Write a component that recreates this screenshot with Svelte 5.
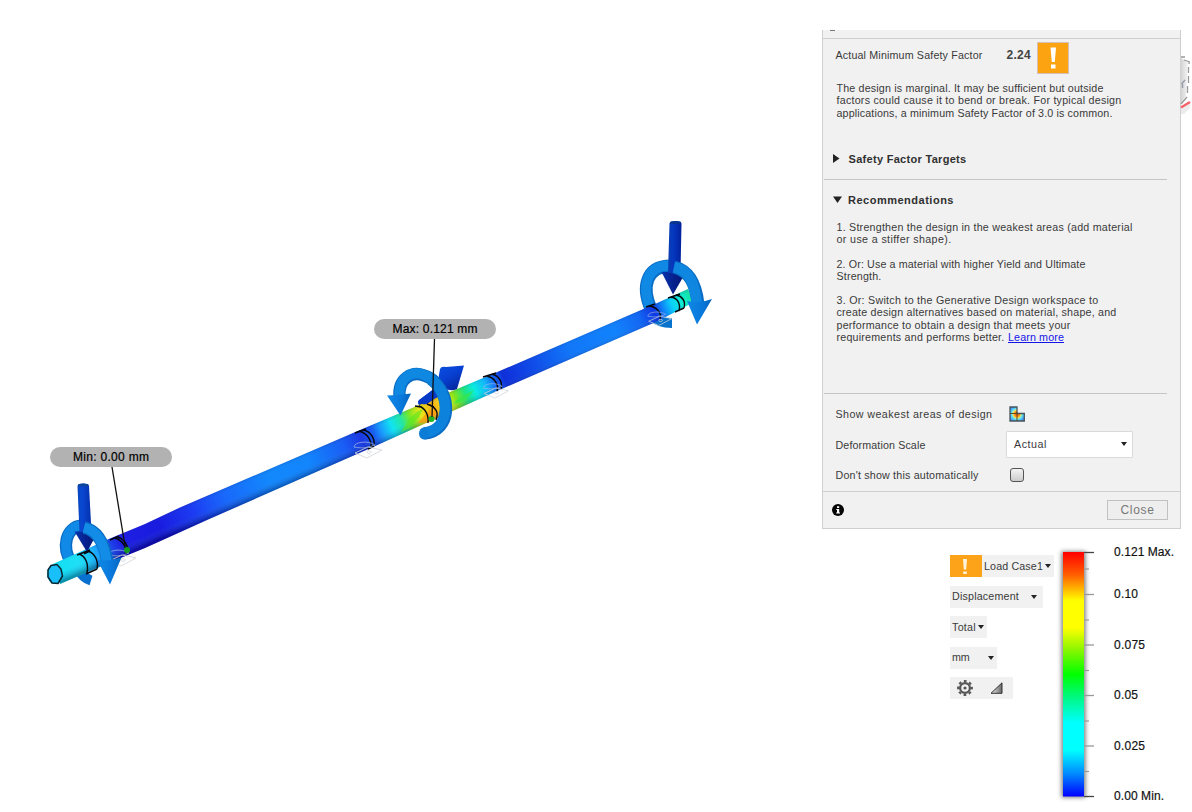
<script>
  const shaft = [
    [55, '#0be3f2'], [80, '#1be2f4'], [94, '#18b8fb'], [104, '#1585fb'], [112, '#1740e6'], [122, '#1a16e0'], [160, '#1412dc'],
    [195, '#1736f2'], [225, '#1463fb'], [270, '#0d86fc'], [310, '#0d82fc'], [345, '#1558f4'], [362, '#1730e0'], [374, '#1458f0'],
    [382, '#149cfc'], [392, '#0be6f2'], [402, '#1eeaa0'], [411, '#7cee14'], [421, '#f0ea0a'], [434, '#ffb40c'],
    [447, '#f8ee08'], [456, '#7fe80e'], [466, '#18e87a'], [475, '#04f0df'], [486, '#0cb8fb'], [494, '#1268f4'],
    [504, '#0a28d8'], [530, '#0a42e6'], [570, '#0c74f8'], [615, '#0c80fc'], [640, '#0e62f2'], [655, '#0a2ee0'], [663, '#0a80f8'],
    [672, '#04d4fa'], [682, '#08f3cc'], [692, '#12e69a']
  ];
  const outline = 'M53 564 110 538.5 145 524 180 507.500 360 430 495 373 655 304 688 289 694 302 658 321 497 391 373 447 207 520 145 548 123 557 60 584Z';
  const ticks = [
    { y: 552, label: '0.121 Max.', width: 60 }, { y: 594, label: '0.10', width: 24 }, { y: 644.5, label: '0.075', width: 31 },
    { y: 695, label: '0.05', width: 24 }, { y: 745.5, label: '0.025', width: 31 }, { y: 796, label: '0.00 Min.', width: 50 }
  ];
  const minor = [568.5, 619.5, 670, 720.5, 771];
  const recs = [
    [['1. Strengthen the design in the weakest areas (add material', 296], ['or use a stiffer shape).', 115]],
    [['2. Or: Use a material with higher Yield and Ultimate', 249], ['Strength.', 45]],
    [['3. Or: Switch to the Generative Design workspace to', 262], ['create design alternatives based on material, shape, and', 280],
     ['performance to obtain a design that meets your', 234], ['requirements and performs better.', 168]]
  ];
  const summary = [
    ['The design is marginal. It may be sufficient but outside', 267],
    ['factors could cause it to bend or break. For typical design', 285],
    ['applications, a minimum Safety Factor of 3.0 is common.', 276]
  ];
  // Spreads the letters so that a line takes the given width.
  const fit = (node, width) => {
    const range = document.createRange();
    range.selectNodeContents(node);
    const extra = width - range.getBoundingClientRect().width;
    node.style.letterSpacing = extra / node.textContent.length + 'px';
  };
</script>

<div class="app">
  <svg class="scene" width="822" height="812" viewBox="0 0 822 812">
    <defs>
      <linearGradient id="shaft" gradientUnits="userSpaceOnUse" x1="55" y1="574" x2="692" y2="296">
        {#each shaft as [x, color]}<stop offset={(x - 55) / 637} stop-color={color} />{/each}
      </linearGradient>
      <linearGradient id="shade" gradientUnits="userSpaceOnUse" x1="361" y1="428" x2="370" y2="449">
        <stop offset="0" stop-color="#003" stop-opacity=".22" /><stop offset=".25" stop-color="#6af" stop-opacity=".06" />
        <stop offset=".6" stop-color="#6af" stop-opacity=".06" /><stop offset="1" stop-color="#003" stop-opacity=".36" />
      </linearGradient>
      <linearGradient id="stem"><stop offset="0" stop-color="#0a45bd" /><stop offset=".3" stop-color="#0848d2" /><stop offset="1" stop-color="#0430ac" /></linearGradient>
      <linearGradient id="stemR"><stop offset="0" stop-color="#0a3fb0" /><stop offset=".4" stop-color="#0538c0" /><stop offset="1" stop-color="#03209c" /></linearGradient>
      <linearGradient id="cone"><stop offset="0" stop-color="#0a35b0" /><stop offset=".5" stop-color="#06208c" /><stop offset="1" stop-color="#041470" /></linearGradient>
      <linearGradient id="push" x1="0" y1="0" x2=".6" y2="1"><stop offset="0" stop-color="#0a50e0" /><stop offset=".5" stop-color="#0840d2" /><stop offset="1" stop-color="#0628a0" /></linearGradient>
      <linearGradient id="turn"><stop offset="0" stop-color="#1089e4" /><stop offset=".6" stop-color="#0878dc" /><stop offset="1" stop-color="#0664bc" /></linearGradient>
      <g id="fixture" fill="none" stroke="#d3d6da" stroke-width="1" opacity=".85">
        <path d="M-11 5 2-1 16 2 1 10Z" /><path d="M-12-1C-12-6 2-8 9-3C3-1-2 1-12-1Z" stroke="#a9c0e4" opacity=".8" /><ellipse cx="3" cy="4" rx="2.200" ry="1.300" />
      </g>
    </defs>

    <g fill="none">
      <path d="M82 525.500C65 527 62 548 71 562" stroke="#0a6cc4" stroke-width="12.300" /><path d="M82 525C65 527 62 547 70.500 562" stroke="#108ae6" stroke-width="9.500" />
      <path d="M78 569Q83 578 91 580.500" stroke="#0870cf" stroke-width="10" />
      <path d="M669 266C647 267 641 286 651 309" stroke="#0a6cc4" stroke-width="12.800" /><path d="M669 265.500C647 266 641 285 650.500 309" stroke="#1089e4" stroke-width="10" />
      <path d="M651 316Q659 323 672 323" stroke="#0873cd" stroke-width="10" />
    </g>
    <path d="M418 401 440 384 447 391 427 407Q417 407 418 401Z" fill="#083ac8" />

    <path d={outline} fill="url(#shaft)" />
    <path d={outline} fill="url(#shade)" />
    <path d="M401 432 409 419 418 411 423 409 419 417 410 428Z" fill="#5be521" opacity=".6" />
    <path d="M418 423 430 409 437 412 431 422Z" fill="#ff960b" opacity=".7" />
    <path d="M453 404 459 398 474 390 466 400Z" fill="#35e648" opacity=".7" />
    <path d="M419 400 437 387 443 393 427 404Q418 405 419 400Z" fill="#083ac8" />
    <ellipse cx="54.700" cy="574" rx="7.500" ry="10" fill="#18bff8" />
    <path d="M51 565.500 57 564.500 61 569 62.500 576 58 583.500 52 583 48 577 48 570Z" fill="none" stroke="#062630" stroke-width="1.500" />

    <g fill="none" stroke="#05070d" stroke-width="1.400">
      <path d="M79 554C85 556 89 563 87 573M88 551C94 553 99 560 97 569M77 555 90 550M86 574 97 569" />
      <path d="M115 538C122 540 127 547 126 554M118 537C124 539 128 545 128 551M110 540 119 536" />
      <path d="M359 431C367 433 372 440 371 448M363 430C370 431 375 438 374 445M355 433 366 429M368 449 374 446" />
      <path d="M419 406C425 408 429 415 428 423M430 405C436 408 439 412 436 420M415 406 421 407M427 404 434 407" />
      <path d="M487 376C495 378 499 385 497 391M492 374C499 376 503 382 501 389M483 377 496 373" />
      <path d="M649 306C657 307 662 313 660 319M646 307 655 304M671 297C677 298 681 303 679 311M676 295C682 296 686 301 684 308M668 298 680 294M675 312 684 308" />
    </g>
    <use href="#fixture" transform="translate(120 556)" /><use href="#fixture" transform="translate(366 448)" />
    <use href="#fixture" transform="translate(494 389) scale(.9)" /><use href="#fixture" transform="translate(658 317) scale(.85)" />

    <!-- left load -->
    <path d="M74.500 531.500H98L87 552Z" fill="url(#cone)" />
    <path d="M77.500 486Q77.500 483.500 83 483.500T89 486L91.500 532H79.500Z" fill="url(#stem)" /><ellipse cx="83.300" cy="485" rx="5.300" ry="1.500" fill="#0c4499" />
    <path d="M84 527.500C99 531 105 545 107.500 563" fill="none" stroke="#0a6cc4" stroke-width="12.300" /><path d="M84 527.500C99 531 104 545 107 563" fill="none" stroke="#128ce6" stroke-width="10" />
    <path d="M97 559.500Q108 562 121.500 557.500L110 584.500Z" fill="url(#turn)" />
    <path d="M84 553.500 90 550.500" stroke="#05070d" stroke-width="2.200" />

    <!-- centre load -->
    <path d="M440 369Q441 366 446 367L464 365.500 457 389Q448 393 439 384Q438 376 440 369Z" fill="url(#push)" />
    <path d="M399.500 397C398 378 412 371 424 375.500Q430 377 435 382" fill="none" stroke="#0a6cc4" stroke-width="12.300" />
    <path d="M399.500 397C398 377 412 370 424 375Q430 377 435 382" fill="none" stroke="#0f88e2" stroke-width="10" />
    <path d="M387 395.500Q397 395 411 393.500L400.500 415.500Z" fill="url(#turn)" />
    <path d="M431 379C452 394 452 431 424 433.500" fill="none" stroke="#0a6cc4" stroke-width="12.500" />
    <path d="M431 379C451 394 451 430 424 433" fill="none" stroke="#0c82dd" stroke-width="10.500" />
    <ellipse cx="424" cy="433.500" rx="5" ry="6" fill="#0c7cd6" />
    <circle cx="431.500" cy="419" r="3" fill="#23b52a" />
    <path d="M434.500 339 432 417" stroke="#111" stroke-width="1.300" />

    <!-- right load -->
    <path d="M661.500 272H686L673 294.500Z" fill="url(#cone)" />
    <path d="M669.500 223.500Q669.500 221 675.500 221T681.500 223.500L680.500 273H668Z" fill="url(#stemR)" /><ellipse cx="675.500" cy="222.500" rx="5.500" ry="1.500" fill="#0a358c" />
    <path d="M674 267C690 271 696 285 698 304" fill="none" stroke="#0a6cc4" stroke-width="12.800" /><path d="M674 267C690 270 695 285 697 304" fill="none" stroke="#0f86e0" stroke-width="10.500" />
    <path d="M687 301Q699 304 712 299L697 324.500Z" fill="url(#turn)" />

    <path d="M112 467 125.500 549" stroke="#111" stroke-width="1.300" /><circle cx="127" cy="550" r="3" fill="#129b22" />
    <g fill="#b2b2b2"><rect x="50" y="447" width="122" height="20" rx="10" /><rect x="374" y="319" width="122" height="20" rx="10" /></g>
    <g class="callout"><text x="73" y="461" textLength="76">Min: 0.00 mm</text><text x="392.500" y="333" textLength="85">Max: 0.121 mm</text></g>
  </svg>

  <aside>
    <section class="panel">
      <div class="sliver"><i></i></div>
      <div class="factor"><span use:fit={147}>Actual Minimum Safety Factor</span><b>2.24</b>
        <svg width="32" height="32" viewBox="0 0 32 32"><rect x=".5" y=".5" width="31" height="31" fill="#fca311" stroke="#d6bfb4" /><path d="M13.500 5.500H19L17.800 20H14.800ZM14 22.500H18.500V26.500H14Z" fill="#fff" /></svg>
      </div>
      <p class="summary">{#each summary as [line, width]}<span class="line"><span use:fit={width}>{line}</span></span>{/each}</p>
      <h2 class="targets"><svg width="8" height="9"><path d="M1 0V9L7.500 4.500Z" fill="#222" /></svg><span use:fit={118}>Safety Factor Targets</span></h2>
      <hr />
      <h2 class="rec"><svg width="9" height="7"><path d="M0 .5H9L4.500 7Z" fill="#222" /></svg><span use:fit={106}>Recommendations</span></h2>
      <div class="recs">
        {#each recs as rec, i}
          <p>{#each rec as [line, width], j}<span class="line"><span use:fit={width}>{line}</span>{#if i === 2 && j === 3}<a href="#learn"><span use:fit={56}>Learn more</span></a>{/if}</span>{/each}</p>
        {/each}
      </div>
      <hr />
      <div class="options">
        <div class="row"><span use:fit={157}>Show weakest areas of design</span>
          <svg width="16" height="16" viewBox="0 0 16 16">
            <defs><radialGradient id="hot" gradientUnits="userSpaceOnUse" cx="8" cy="8" r="9.500"><stop offset="0" stop-color="#ff4b00" /><stop offset=".3" stop-color="#ff9a1f" /><stop offset=".42" stop-color="#e9e765" /><stop offset=".58" stop-color="#55dffc" /><stop offset="1" stop-color="#3c69ed" /></radialGradient></defs>
            <path d="M1 1H8V7.500H15.300V15H1Z" fill="url(#hot)" stroke="#48545c" stroke-width="1.300" /><path d="M1 7.500H9M8 6V15" stroke="#5a4b28" stroke-width="1" />
          </svg>
        </div>
        <div class="row"><span use:fit={90}>Deformation Scale</span><div class="select"><span use:fit={33}>Actual</span><svg width="6" height="4"><path d="M0 0H6L3 4Z" fill="#222" /></svg></div></div>
        <div class="row"><span use:fit={143}>Don't show this automatically</span><i class="check"></i></div>
      </div>
      <footer>
        <svg width="12" height="12" viewBox="0 0 12 12"><circle cx="6" cy="6" r="6" fill="#050505" /><path d="M5 2.200H7.200V4H5ZM4.300 5H7.200V8.500H8V9.600H4.200V8.500H5V6H4.300Z" fill="#fff" /></svg>
        <button><span use:fit={34}>Close</span></button>
      </footer>
    </section>

    <svg class="cube" width="12" height="70" viewBox="1180 50 12 70">
      <defs><linearGradient id="face"><stop offset="0" stop-color="#d4d4d6" /><stop offset="1" stop-color="#f4f4f5" /></linearGradient></defs>
      <path d="M1181 58 1188 62 1186 96 1181 104Z" fill="url(#face)" /><path d="M1181 109 1190 103V108L1184 114H1181Z" fill="#ececec" />
      <path d="M1181 57H1185M1184 60 1190 62M1189 62V64M1188.500 67V73M1188.500 76V83M1187.500 86V93M1187 97 1181 104" stroke="#999" fill="none" stroke-width="1.300" />
      <path d="M1181.500 84 1185 80M1182.500 84V88" stroke="#9a9da7" stroke-width="1.500" /><path d="M1181 107.500 1190 102" stroke="#f4646b" stroke-width="2.600" />
    </svg>

    <section class="results">
      <div class="controls">
        <div class="chip case"><svg width="32" height="22"><path fill="#fca31a" d="M0 0H32V22H0Z" /><path d="M13 4H17L16.200 14.500H13.800ZM13.200 16.500H16.800V19H13.200Z" fill="#fff3dc" /></svg><span use:fit={59}>Load Case1</span><i></i></div>
        <div class="chip disp"><span use:fit={67}>Displacement</span><i></i></div>
        <div class="chip total"><span use:fit={24}>Total</span><i></i></div>
        <div class="chip unit"><span use:fit={17.500}>mm</span><i></i></div>
        <div class="chip tools">
          <svg width="16" height="16" viewBox="0 0 16 16"><g stroke="#555" fill="none"><circle cx="8" cy="8" r="4.900" stroke-width="2.300" /><circle cx="8" cy="8" r="6.900" stroke-width="2" stroke-dasharray="2.800 2.619" stroke-dashoffset="1.400" /></g><circle cx="8" cy="8" r="1.600" fill="#555" /></svg>
          <svg width="13" height="12" viewBox="0 0 13 12"><defs><linearGradient id="tri"><stop offset="0" stop-color="#eee" /><stop offset="1" stop-color="#666" /></linearGradient></defs><path d="M1 11.300H12V.8Z" fill="url(#tri)" stroke="#333" /></svg>
        </div>
      </div>
      <svg class="legend" width="132" height="270" viewBox="1054 542 132 270">
        <defs><linearGradient id="scale" x2="0" y2="1">
          <stop offset="0" stop-color="#f00" /><stop offset=".09" stop-color="#ff5a00" /><stop offset=".2" stop-color="#ff0" /><stop offset=".31" stop-color="#ff0" /><stop offset=".4" stop-color="#8af600" /><stop offset=".5" stop-color="#0f0" /><stop offset=".6" stop-color="#00f88a" /><stop offset=".7" stop-color="#0ff" /><stop offset=".81" stop-color="#0ff" /><stop offset=".91" stop-color="#0086ff" /><stop offset="1" stop-color="#00f" />
        </linearGradient><filter id="soft" x="-40%" width="180%" y="-5%" height="110%"><feGaussianBlur stdDeviation="2" /></filter></defs>
        <rect x="1061.500" y="551.500" width="24" height="246" fill="#444" opacity=".7" filter="url(#soft)" />
        <rect x="1063" y="552" width="21" height="244.500" fill="url(#scale)" />
        {#each ticks as tick, i}
          <path d="M1084 {tick.y + .5}H1094" stroke={i === 0 || i === 5 ? '#444' : '#999'} stroke-width="1.300" />
          <text x="1114" y={tick.y + 4.200} textLength={tick.width}>{tick.label}</text>
        {/each}
        {#each minor as y}<path d="M1084 {y + .5}H1089" stroke="#999" stroke-width="1.200" />{/each}
      </svg>
    </section>
  </aside>
</div>

<style>
  :global(body) { margin: 0; background: #fff; }
  .app { width: 1192px; height: 812px; overflow: hidden; display: grid; grid-template-columns: 822px 370px; background: #fff; font: 10.700px/12.300px "Liberation Sans", Arial, sans-serif; color: #3a3a3a; }
  svg { display: block; flex: none; }
  span { white-space: nowrap; }
  .callout text { font-size: 12px; fill: #000; stroke: #000; stroke-width: .2; }
  aside { position: relative; padding-top: 30px; box-sizing: border-box; }
  .panel { width: 359px; height: 499px; box-sizing: border-box; border: 1px solid #cfcfcf; border-top: 0; background: #f1f1f1; display: flex; flex-direction: column; }
  .sliver { height: 8px; border-bottom: 1px solid #cecece; flex: none; }
  .sliver i { display: block; width: 5px; height: 1px; margin-left: 7px; background: #777; }
  .factor { height: 34px; flex: none; display: flex; align-items: center; padding-left: 12.500px; }
  .factor > span { width: 171px; padding-bottom: 1px; }
  .factor b { width: 30.500px; font-size: 12px; letter-spacing: .3px; font-weight: 600; color: #444; padding-bottom: 2px; }
  .factor svg { margin-top: 3px; }
  p { margin: 0; }
  .line { display: block; height: 12.300px; white-space: nowrap; }
  .summary { margin: 9px 0 0 13.500px; height: 64px; }
  h2 { margin: 0; font: bold 11px/14px "Liberation Sans", Arial, sans-serif; color: #303030; display: flex; align-items: center; }
  .targets { height: 14px; gap: 9px; padding-left: 8.500px; margin-top: 6px; margin-bottom: 13px; }
  .targets svg { margin-top: -2px; }
  .rec { padding-left: 10px; gap: 6px; height: 14px; margin-top: 13px; }
  .rec svg { margin-top: -1px; }
  hr { width: 343px; height: 1px; border: 0; margin: 0 0 0 1px; background: #c5c5c5; flex: none; }
  .recs { margin: 14px 0 0 13.500px; height: 172px; display: flex; flex-direction: column; gap: 12px; }
  a { color: #1414e8; margin-left: 3.500px; text-decoration: underline; text-underline-offset: 1px; }
  .options { padding: 5px 0 0 12.500px; }
  .row { height: 30.500px; display: flex; align-items: center; }
  .row > span { width: 170.500px; flex: none; }
  .row > svg { margin-left: 3px; }
  .select { width: 127px; height: 27px; border: 1px solid #dadada; border-radius: 1px; box-sizing: border-box; background: #fff; display: flex; justify-content: space-between; align-items: center; padding: 0 5px 0 7px; margin-top: -1px; }
  .select svg { margin-top: -1px; }
  .check { width: 14px; height: 14px; margin-left: 4px; box-sizing: border-box; border: 1px solid #555; border-radius: 3px; background: linear-gradient(#f4f4f4, #ccc); margin-top: -1px; }
  footer { margin-top: auto; height: 36px; border-top: 1px solid #cfcfcf; display: flex; align-items: center; justify-content: space-between; padding: 0 12px 0 9px; }
  button { width: 61px; height: 20px; border: 1px solid #c1c1c1; background: #eee; color: #777; font: 12px "Liberation Sans", Arial, sans-serif; padding: 0; }
  .cube { position: absolute; left: 358px; top: 50px; }
  .results { display: flex; padding-left: 128px; margin-top: 13px; }
  .controls { width: 104px; padding-top: 13px; display: flex; flex-direction: column; align-items: flex-start; gap: 8.500px; }
  .chip { height: 22px; background: #f1f1f1; display: flex; align-items: center; padding: 0 6px 0 2px; box-sizing: border-box; justify-content: space-between; }
  .chip i { width: 0; height: 0; border: 3px solid transparent; border-top: 4px solid #222; border-bottom: 0; }
  .case { width: 104px; padding: 0 3px 0 0; } .disp { width: 93px; } .total { width: 37px; padding-right: 3px; } .unit { width: 47px; padding-right: 3px; } .tools { width: 63px; padding: 0 10px 0 7px; }
  .legend text { font-size: 12px; fill: #111; stroke: #111; stroke-width: .18; }
</style>
